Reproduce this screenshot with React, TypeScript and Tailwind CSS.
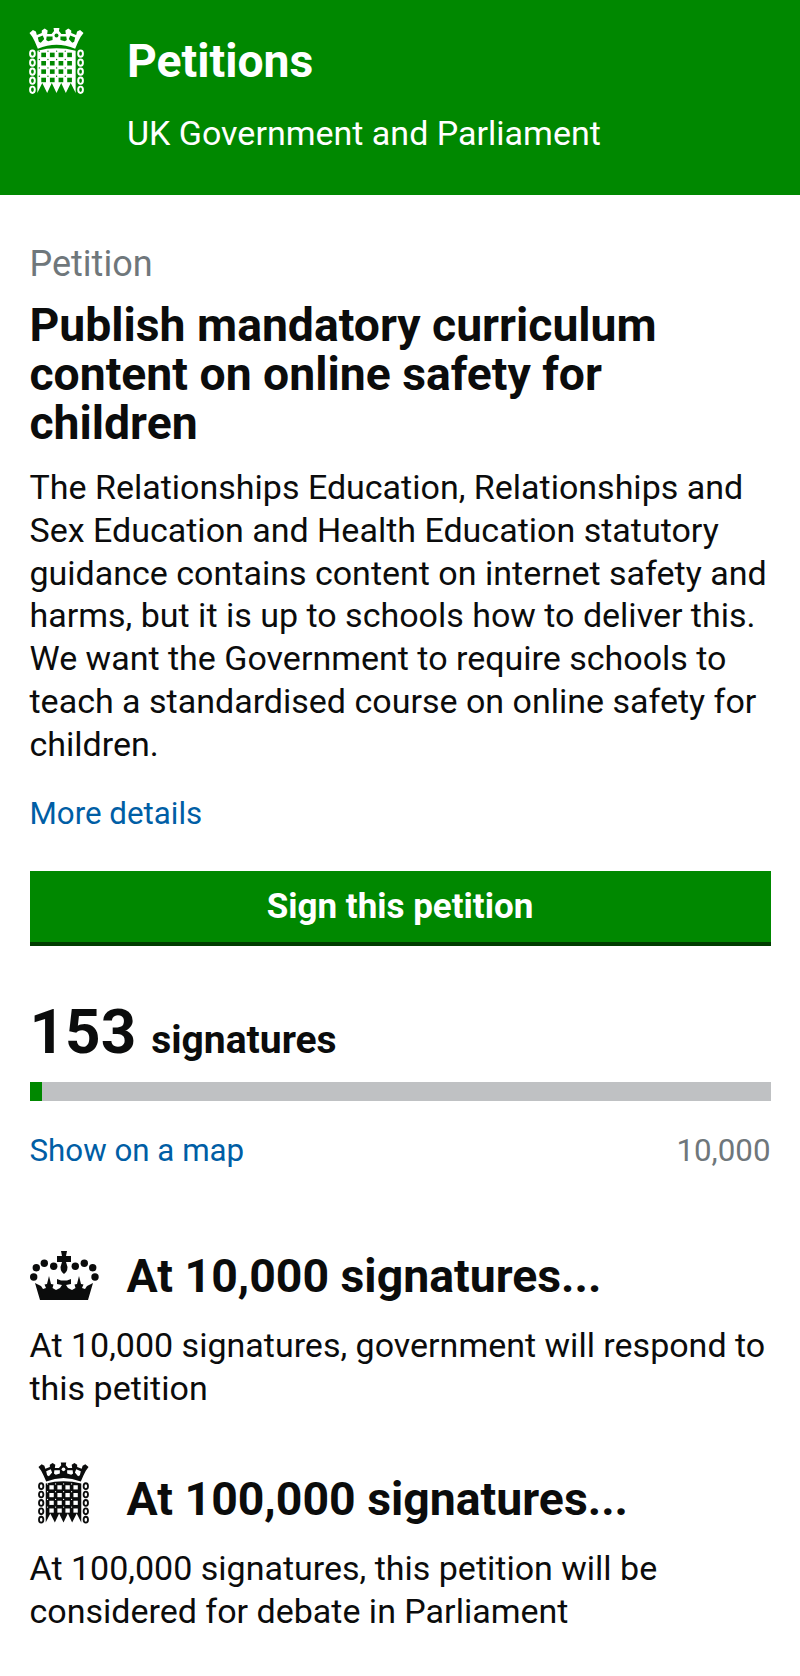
const Portcullis = ({ fg, bg, className }: { fg: string; bg: string; className: string }) => {
  const cols = [0, 1, 2, 3];
  const links = [0, 1, 2, 3, 4];
  return (
    <svg viewBox="0 0 56 67" className={className}>
      {/* crown */}
      <path
        fill={fg}
        d="M0.500 5 L4 2 L7 3.500 L8 7 L13 5 L13 2.500 L16 0.500 L19 2.500 L18.500 6 L23 6 L25.500 3 L25 0 H31 L30.500 3 L33 6 L37.500 6 L37 2.500 L40 0.500 L43 2.500 L43 5 L48 7 L49 3.500 L52 2 L55.500 5 L52.500 9 L50 14 L47 21 Q28 13 9 21 L6 14 L3.500 9 Z"
      />
      <path
        fill={bg}
        d="M9 9.500 L14 7.500 L15.500 11 L12 15 L10 14 Z M47 9.500 L42 7.500 L40.500 11 L44 15 L46 14 Z M18 8.500 L24 8.500 L24 12 L19.500 13.500 L17.500 12 Z M38 8.500 L32 8.500 L32 12 L36.500 13.500 L38.500 12 Z"
      />
      <circle cx="28" cy="7.500" r="2" fill={bg} />
      {/* gate */}
      <path
        fill={fg}
        d="M8.500 23 Q28 18 47.500 23 V66 L42.500 56 L37.500 66 L32.800 56 L28 66 L23.200 56 L18.500 66 L13.500 56 L8.500 66 Z"
      />
      {cols.map((r) =>
        cols.map((c) => (
          <rect key={`${r}-${c}`} x={12.500 + c * 8.800} y={25 + r * 8.500} width="4.800" height="4.600" fill={bg} />
        )),
      )}
      {cols.map((r) =>
        cols.map((c) => (
          <circle key={`${r}-${c}`} cx={19.300 + c * 8.800 - 8.800} cy={32 + r * 8.500 - 8.500} r="0.700" fill={bg} />
        )),
      )}
      {/* chains */}
      {links.map((i) => (
        <g key={i} fill="none" stroke={fg} strokeWidth="2">
          <ellipse cx="3.500" cy={26 + i * 9.200} rx="2.400" ry="3.200" />
          <ellipse cx="52.500" cy={26 + i * 9.200} rx="2.400" ry="3.200" />
        </g>
      ))}
    </svg>
  );
};

const Crown = ({ className }: { className: string }) => (
  <svg viewBox="0 0 69 50" className={className} fill="#0b0c0c">
    <path d="M31 0 H37 L36 5 H41 V11 H36 L37.500 16 Q37.500 21 34 23 Q30.500 21 30.500 16 L32 11 H27 V5 H32 Z" />
    <circle cx="3.700" cy="26" r="3.700" />
    <circle cx="6.300" cy="16.700" r="3.700" />
    <circle cx="14.300" cy="12.300" r="3.700" />
    <circle cx="23.700" cy="15.300" r="3.700" />
    <circle cx="45.300" cy="15.300" r="3.700" />
    <circle cx="54.300" cy="12.300" r="3.700" />
    <circle cx="62.700" cy="16.700" r="3.700" />
    <circle cx="65" cy="26" r="3.700" />
    <path d="M5 32 L11 35 L13 38 L16 37 L14.500 33.500 L17 33 L19 25 L21 33 L23.500 33.500 L22.500 37 L26 39 L30 37 L32 34 L27 33 L27 28 L31 29.500 H37 L41 28 L41 33 L36 34 L38 37 L42 39 L45.500 37 L44.500 33.500 L47 33 L49 25 L51 33 L53.500 33.500 L52 37 L55 38 L57 35 L63 32 L58 49 H10 Z" />
  </svg>
);

const Threshold = ({ icon, title, text }: { icon: React.ReactNode; title: string; text: string }) => (
  <section className="mb-[57px]">
    <div className="flex items-center h-[64px]">
      <div className="w-[97px] flex shrink-0">{icon}</div>
      <h2 className="text-[46.4px] font-bold leading-none">{title}</h2>
    </div>
    <p className="mt-[16px] text-[34px] leading-[43px]">{text}</p>
  </section>
);

export default function App() {
  return (
    <div className="min-h-[1676px] bg-white text-[#0b0c0c] font-['Roboto',sans-serif]">
      <header className="bg-[#008800] h-[195px] text-white flex pl-[29px] pt-[28px]">
        <Portcullis fg="#ffffff" bg="#008800" className="w-[55px] h-[66px] mr-[43px]" />
        <div>
          <div className="text-[46.3px] font-bold leading-[50px] mt-[8px]">Petitions</div>
          <div className="text-[34px] leading-[40px] mt-[27px]">UK Government and Parliament</div>
        </div>
      </header>

      <main className="px-[29.5px]">
        <p className="text-[36px] leading-[40px] text-[#6f777b] mt-[49px]">Petition</p>
        <h1 className="text-[46.3px] font-bold leading-[49px] mt-[17px]">
          Publish mandatory curriculum content on online safety for children
        </h1>
        <p className="text-[34px] leading-[42.8px] mt-[18px]">
          The Relationships Education, Relationships and Sex Education and Health Education statutory guidance contains
          content on internet safety and harms, but it is up to schools how to deliver this. We want the Government to
          require schools to teach a standardised course on online safety for children.
        </p>
        <a className="block text-[31.3px] leading-[40px] text-[#005ea5] mt-[28px]">More details</a>

        <button className="block w-full h-[75px] mt-[37px] pt-[3px] bg-[#008800] border-b-[4px] border-[#003c00] text-white text-[35px] font-bold">
          Sign this petition
        </button>

        <div className="flex items-baseline mt-[51px] font-bold">
          <span className="text-[62px] leading-[70px] mr-[15px]">153</span>
          <span className="text-[39px]">signatures</span>
        </div>
        <div className="h-[19px] bg-[#bfc1c3] mt-[13px]">
          <div className="h-full bg-[#008800] w-[12px]" />
        </div>
        <div className="flex justify-between text-[31.3px] leading-[40px] mt-[30px]">
          <a className="text-[#005ea5]">Show on a map</a>
          <span className="text-[#6f777b]">10,000</span>
        </div>

        <div className="mt-[73px]">
          <Threshold
            icon={<Crown className="w-[69px] h-[50px]" />}
            title="At 10,000 signatures..."
            text="At 10,000 signatures, government will respond to this petition"
          />
          <Threshold
            icon={<Portcullis fg="#0b0c0c" bg="#ffffff" className="w-[51px] h-[64px] ml-[8px] mb-[12px]" />}
            title="At 100,000 signatures..."
            text="At 100,000 signatures, this petition will be considered for debate in Parliament"
          />
        </div>
      </main>
    </div>
  );
}
